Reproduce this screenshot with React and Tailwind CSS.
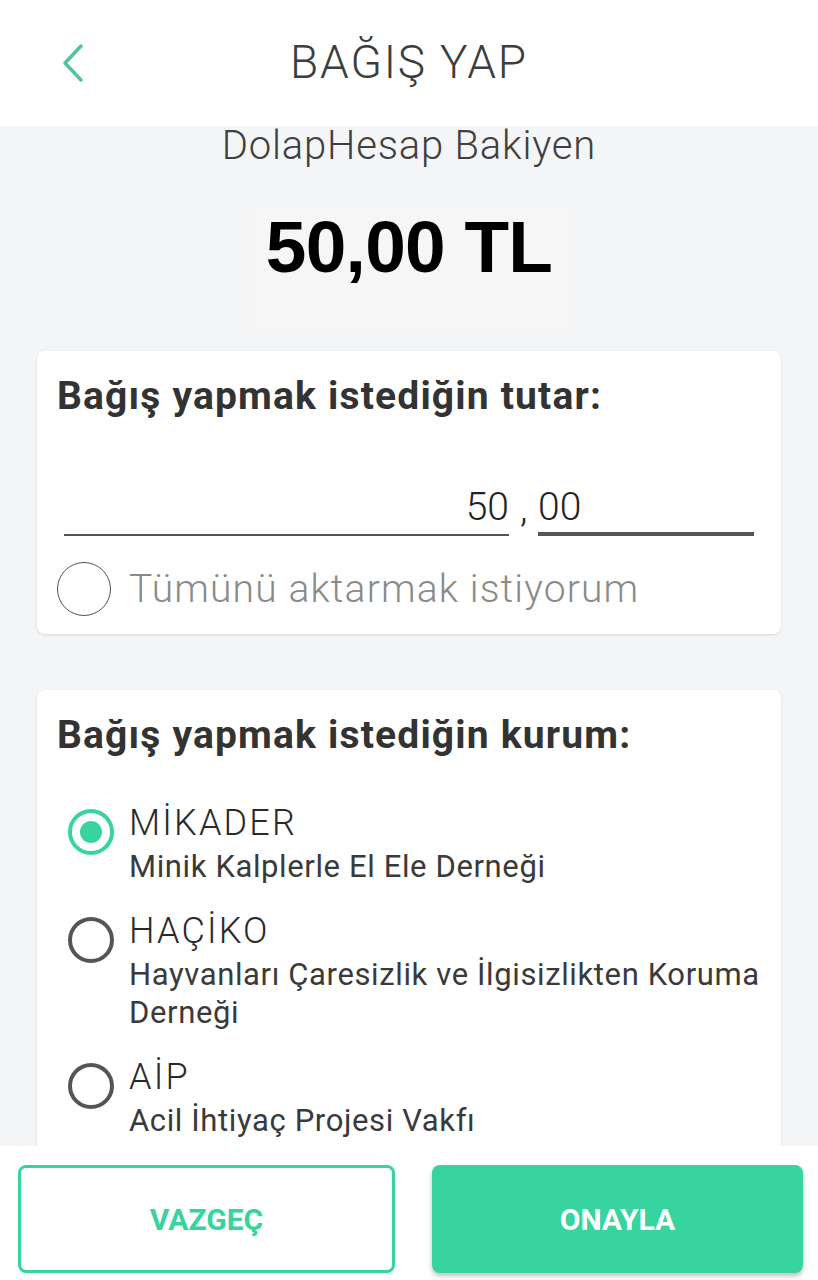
import { useState } from "react";

const ORGS = [
  { code: "MİKADER", name: "Minik Kalplerle El Ele Derneği" },
  { code: "HAÇİKO", name: "Hayvanları Çaresizlik ve İlgisizlikten Koruma Derneği" },
  { code: "AİP", name: "Acil İhtiyaç Projesi Vakfı" },
];

function Radio({ checked }) {
  if (checked) {
    return (
      <span className="flex h-[46px] w-[46px] shrink-0 items-center justify-center rounded-full border-[4px] border-[#37d4a0]">
        <span className="block h-[22px] w-[22px] rounded-full bg-[#37d4a0]" />
      </span>
    );
  }
  return <span className="block h-[46px] w-[46px] shrink-0 rounded-full border-[4px] border-[#555]" />;
}

export default function App() {
  const [selected, setSelected] = useState(0);

  return (
    <div
      className="flex h-[1280px] w-full flex-col overflow-hidden bg-[#f4f5f7]"
      style={{ fontFamily: "Roboto, 'Noto Sans', sans-serif" }}
    >
      {/* HEADER */}
      <header className="grid h-[126px] shrink-0 grid-cols-[1fr_auto_1fr] items-center bg-white">
        <button className="pl-[60px] text-[#55c29e]">
          <svg width="26" height="40" viewBox="0 0 26 40" fill="none">
            <path d="M21 3 L5 20 L21 37" stroke="currentColor" strokeWidth="3.5" strokeLinecap="round" strokeLinejoin="round" />
          </svg>
        </button>
        <h1 className="pb-[2px] text-[46px] font-light tracking-[0.04em] text-[#3d3d3d]">BAĞIŞ YAP</h1>
        <div />
      </header>

      {/* CONTENT */}
      <main className="min-h-0 flex-1">
        <p className="text-center text-[40px] font-light leading-[40px] tracking-[0.02em] text-[#3f3f3f]">
          DolapHesap Bakiyen
        </p>

        <div className="mx-auto mt-[41px] flex h-[122px] w-[318px] justify-center bg-[#f6f6f6]">
          <span
            className="text-[73px] font-bold leading-[80px] tracking-[-0.01em] text-black"
            style={{ fontFamily: "'Liberation Sans', Arial, sans-serif" }}
          >
            50,00 TL
          </span>
        </div>

        {/* AMOUNT CARD */}
        <section className="mx-[37px] mt-[22px] rounded-[8px] bg-white px-[20px] pt-[23px] pb-[18px] shadow-[0_1px_3px_rgba(0,0,0,0.12)]">
          <h2 className="text-[39px] font-bold leading-[44px] tracking-[0.03em] text-[#333]">
            Bağış yapmak istediğin tutar:
          </h2>

          <div className="mt-[69px] flex items-end pl-[7px] pr-[7px]">
            <div className="flex-1 border-b-2 border-[#555] pb-[7px] text-right text-[39px] font-light leading-[40px] text-[#222]">
              50
            </div>
            <span className="w-[29px] pb-[7px] pl-[11px] text-[39px] font-light leading-[40px] text-[#222]">,</span>
            <div className="w-[216px] border-b-[4px] border-[#555] pb-[5px] text-[39px] font-light leading-[40px] text-[#222]">
              00
            </div>
          </div>

          <label className="mt-[26px] flex items-center gap-[18px]">
            <span className="block h-[54px] w-[54px] shrink-0 rounded-full border border-[#555]" />
            <span className="text-[39px] font-light leading-[44px] tracking-[0.03em] text-[#8a8a8a]">
              Tümünü aktarmak istiyorum
            </span>
          </label>
        </section>

        {/* ORGANIZATION CARD */}
        <section className="mx-[37px] mt-[56px] rounded-[8px] bg-white px-[20px] pt-[23px] pb-[40px] shadow-[0_1px_3px_rgba(0,0,0,0.12)]">
          <h2 className="text-[39px] font-bold leading-[44px] tracking-[0.03em] text-[#333]">
            Bağış yapmak istediğin kurum:
          </h2>

          <div className="mt-[46px] flex flex-col gap-[25px] pl-[11px]">
            {ORGS.map((o, i) => (
              <div key={o.code} className="flex items-start gap-[15px]" onClick={() => setSelected(i)}>
                <div className="pt-[6px]">
                  <Radio checked={selected === i} />
                </div>
                <div>
                  <div className="text-[36px] font-light leading-[40px] tracking-[0.06em] text-[#2a2a2a]">{o.code}</div>
                  <div className="mt-[5px] text-[31px] leading-[38px] tracking-[0.02em] text-[#3a3a3a]">{o.name}</div>
                </div>
              </div>
            ))}
          </div>
        </section>
      </main>

      {/* FOOTER */}
      <footer className="relative flex h-[134px] shrink-0 gap-[37px] bg-white pr-[15px] pl-[18px] pt-[19px]">
        <button className="h-[108px] flex-1 rounded-[8px] border-[3px] border-[#37d4a0] text-[30px] font-bold text-[#37d4a0]">
          VAZGEÇ
        </button>
        <button className="h-[108px] flex-1 rounded-[8px] bg-[#37d4a0] text-[30px] font-bold text-white shadow-[0_3px_5px_rgba(0,0,0,0.25)]">
          ONAYLA
        </button>
      </footer>
    </div>
  );
}
